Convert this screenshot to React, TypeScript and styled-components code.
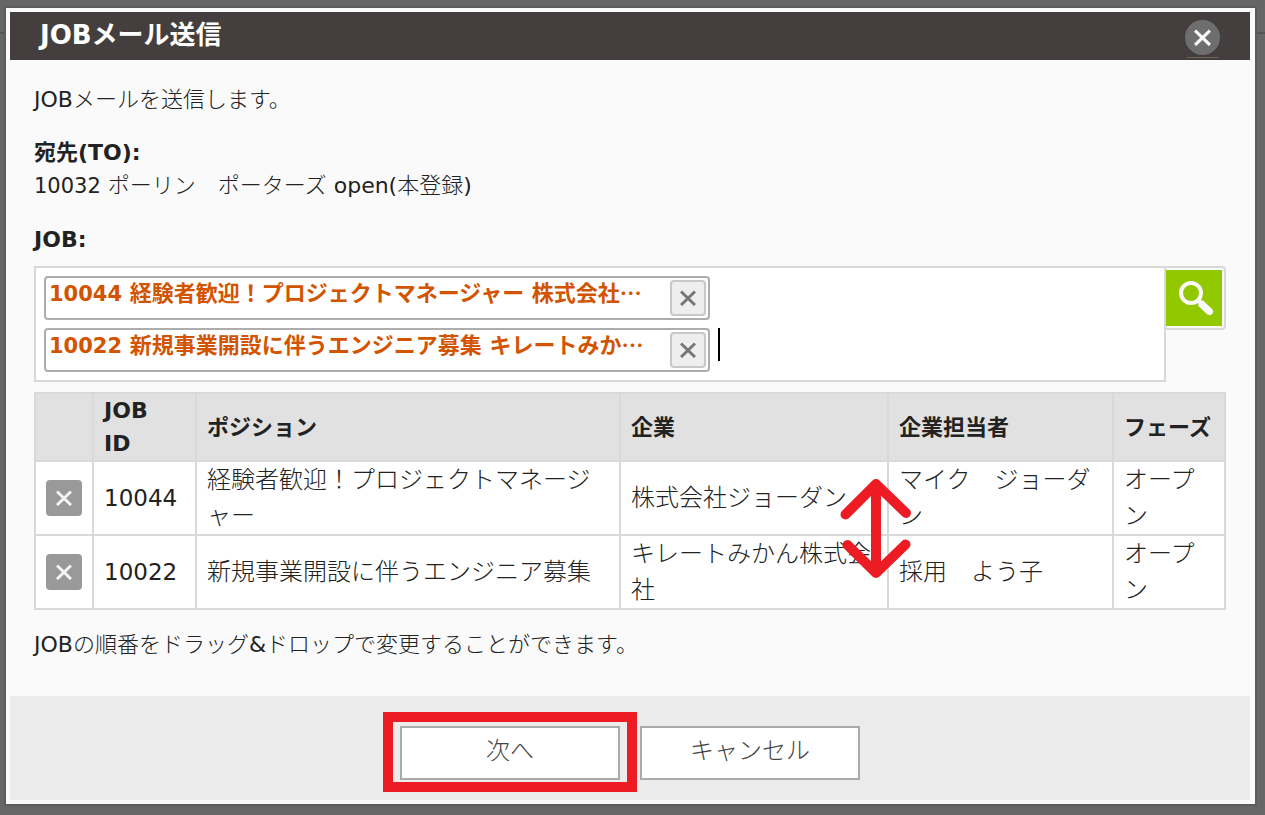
import React from "react";
import styled, { createGlobalStyle } from "styled-components";

const cjk = `"Noto Sans CJK JP", sans-serif`;
const red = "#ed1c24";
const line = "#d9d9d9";

const GlobalStyle = createGlobalStyle`
  *, *::before, *::after { box-sizing: border-box; }
  html, body { margin: 0; min-height: 100%; }
  body {
    background: linear-gradient(#555, #555) 0 32px / 100% 2px no-repeat #666;
    color: #222;
    font: 300 22px/33px "DejaVu Sans", ${cjk};
  }
  button, input { font: inherit; margin: 0; }
`;

const Page = styled.div`
  padding: 8px 10px 11px 6px;
`;

const Dialog = styled.section`
  background: #fafafa;
  padding: 4px 5px 4px 4px;
  box-shadow: 0 0 0 2px #5c5c5c;
`;

const Header = styled.header`
  display: flex;
  justify-content: space-between;
  align-items: flex-start;
  height: 48px;
  padding: 0 30px;
  background: #443f3e;
`;

const Title = styled.h1`
  margin: 0;
  color: #fff;
  font-size: 26px;
  line-height: 46px;
  font-weight: 700;
`;

const CloseWrap = styled.div`
  height: 46px;
  padding-top: 8px;
  background: linear-gradient(#6b6753, #6b6753) center bottom / 31px 1px no-repeat;
`;

const CloseButton = styled.button`
  display: grid;
  place-items: center;
  width: 35px;
  height: 35px;
  padding: 0;
  border: 0;
  border-radius: 50%;
  background: #6e6e6e;
  color: #fafafa;
`;

const Body = styled.div`
  padding: 23px 24px 35px;
`;

const Paragraph = styled.p`
  margin: 0 0 20px;
`;

const Address = styled.dl`
  margin: 0 0 20px;
`;

const Term = styled.dt`
  font-weight: 700;
`;

const Detail = styled.dd`
  margin: 0;
`;

const Label = styled.label`
  display: block;
  margin-bottom: 10px;
  font-weight: 700;
`;

/* The kana and kanji are light; Latin letters and digits keep a regular weight. */
const Latin = styled.span`
  font-weight: 400;
`;

const Digits = styled.span<{ $size?: number; $bold?: boolean }>`
  font-size: ${(p) => p.$size ?? 21}px;
  font-weight: ${(p) => (p.$bold ? 700 : 400)};
`;

const Picker = styled.div`
  display: flex;
  align-items: flex-start;
  margin-bottom: 10px;
`;

const TokenField = styled.div`
  flex: 1;
  display: flex;
  flex-wrap: wrap;
  align-items: flex-start;
  gap: 8px;
  min-width: 0;
  padding: 8px;
  border: 2px solid ${line};
  background: #fff;
`;

const Token = styled.div`
  flex: 0 1 666px;
  display: flex;
  justify-content: space-between;
  height: 44px;
  padding: 2px 2px 2px 3px;
  border: 2px solid #adadad;
  border-radius: 4px;
`;

const TokenText = styled.span`
  color: #d35400;
  font-weight: 700;
  line-height: 22px;
  white-space: nowrap;
`;

const Ellipsis = styled.span`
  font-family: ${cjk};
`;

const IconButton = styled.button<{ $solid?: boolean }>`
  flex: none;
  display: grid;
  place-items: center;
  width: 36px;
  height: 36px;
  padding: 0;
  border: 2px solid ${(p) => (p.$solid ? "#999" : "#c8c8c8")};
  border-radius: 4px;
  background: ${(p) => (p.$solid ? "#999" : "#eee")};
  color: ${(p) => (p.$solid ? "#f5f5f5" : "#777")};
`;

const TokenInput = styled.input`
  flex: 1 1 100px;
  min-width: 0;
  height: 33px;
  padding: 0;
  border: 0;
  border-left: 2px solid #000;
  border-radius: 0;
  background: none;
  outline: none;
`;

const SearchButton = styled.button`
  flex: none;
  width: 60px;
  height: 64px;
  padding: 2px 2px 2px 0;
  border: 2px solid ${line};
  border-left: 0;
  border-radius: 0 4px 4px 0;
  background: #fafafa;
`;

const SearchFace = styled.span`
  display: grid;
  place-items: center;
  height: 100%;
  background: #92c800;
`;

const TableArea = styled.div`
  position: relative;
  margin-bottom: 18px;
`;

const Table = styled.table`
  width: 100%;
  table-layout: fixed;
  border-collapse: collapse;
  background: #fff;
`;

const Col = styled.col<{ $width?: number }>`
  width: ${(p) => (p.$width ? `${p.$width}px` : "auto")};
`;

const Th = styled.th`
  padding: 0 10px;
  border: 2px solid ${line};
  background: #e1e1e1;
  font-weight: 700;
  text-align: left;
`;

const Td = styled.td`
  padding: 0 10px;
  border: 2px solid ${line};
  font-size: 24px;
  line-height: 36px;
  height: 74px;
`;

const DragArrow = styled.svg`
  position: absolute;
  left: 67.5%;
  top: 82px;
`;

const Note = styled.p`
  margin: 0;
`;

const Footer = styled.footer`
  display: flex;
  justify-content: center;
  gap: 20px;
  padding: 30px 0 20px;
  background: #ececec;
`;

const ActionButton = styled.button<{ $marked?: boolean }>`
  position: relative;
  width: 220px;
  height: 54px;
  padding: 0 0 4px;
  border: 2px solid #aaa;
  background: #fff;
  color: #444;
  font-size: 24px;

  &::after {
    content: "";
    display: ${(p) => (p.$marked ? "block" : "none")};
    position: absolute;
    inset: -16px -19px -14px;
    border: 10px solid ${red};
  }
`;

const Cross = ({ size = 16, weight = 3 }: { size?: number; weight?: number }) => (
  <svg width={size} height={size} viewBox="0 0 16 16" fill="none" stroke="currentColor" strokeWidth={weight} aria-hidden="true">
    <path d="M1 1.5 15 15M15 1.5 1 15" />
  </svg>
);

const tokens = [
  { id: "10044", text: "経験者歓迎！プロジェクトマネージャー 株式会社" },
  { id: "10022", text: "新規事業開設に伴うエンジニア募集 キレートみか" },
];

const jobs = [
  { id: "10044", position: "経験者歓迎！プロジェクトマネージャー", company: "株式会社ジョーダン", owner: "マイク　ジョーダン", phase: "オープン" },
  { id: "10022", position: "新規事業開設に伴うエンジニア募集", company: "キレートみかん株式会社", owner: "採用　よう子", phase: "オープン" },
];

export default function App() {
  return (
    <Page lang="ja">
      <GlobalStyle />
      <Dialog role="dialog" aria-labelledby="dialog-title">
        <Header>
          <Title id="dialog-title">JOBメール送信</Title>
          <CloseWrap>
            <CloseButton type="button" aria-label="閉じる">
              <Cross size={17} />
            </CloseButton>
          </CloseWrap>
        </Header>
        <Body>
          <Paragraph><Latin>JOB</Latin>メールを送信します。</Paragraph>
          <Address>
            <Term>宛先(TO):</Term>
            <Detail>
              <Digits>10032</Digits> ポーリン　ポーターズ <Latin>open(</Latin>本登録<Latin>)</Latin>
            </Detail>
          </Address>
          <Label htmlFor="job">JOB:</Label>
          <Picker>
            <TokenField>
              {tokens.map((t) => (
                <Token key={t.id}>
                  <TokenText>
                    <Digits $bold>{t.id}</Digits> {t.text}
                    <Ellipsis>…</Ellipsis>
                  </TokenText>
                  <IconButton type="button" aria-label={`${t.id} を削除`}>
                    <Cross />
                  </IconButton>
                </Token>
              ))}
              <TokenInput id="job" type="text" />
            </TokenField>
            <SearchButton type="button" aria-label="検索">
              <SearchFace>
                <svg width="40" height="40" viewBox="0 0 40 40" fill="none" stroke="#fafafa" aria-hidden="true">
                  <circle cx="17" cy="15" r="10" strokeWidth="4" />
                  <path d="M24 22 27 25" strokeWidth="5" />
                  <path d="M26.5 25 36 34" strokeWidth="7" />
                  <path d="M28 26.500 35.500 33.500" strokeWidth="7" strokeLinecap="round" />
                </svg>
              </SearchFace>
            </SearchButton>
          </Picker>
          <TableArea>
            <Table>
              <colgroup>
                <Col $width={58} />
                <Col $width={103} />
                <Col />
                <Col $width={268} />
                <Col $width={225} />
                <Col $width={112} />
              </colgroup>
              <thead>
                <tr>
                  <Th />
                  <Th scope="col">JOB<br />ID</Th>
                  <Th scope="col">ポジション</Th>
                  <Th scope="col">企業</Th>
                  <Th scope="col">企業担当者</Th>
                  <Th scope="col">フェーズ</Th>
                </tr>
              </thead>
              <tbody>
                {jobs.map((j) => (
                  <tr key={j.id}>
                    <Td>
                      <IconButton $solid type="button" aria-label={`${j.id} を外す`}>
                        <Cross />
                      </IconButton>
                    </Td>
                    <Td><Digits $size={23}>{j.id}</Digits></Td>
                    <Td>{j.position}</Td>
                    <Td>{j.company}</Td>
                    <Td>{j.owner}</Td>
                    <Td>{j.phase}</Td>
                  </tr>
                ))}
              </tbody>
            </Table>
            <DragArrow width="74" height="108" viewBox="0 0 74 108" fill="none" stroke={red} strokeWidth="10" strokeLinecap="round" strokeLinejoin="round" aria-hidden="true">
              <path d="M6.5 40.5 37 10 67 39M37 10V99M8.5 71 37 99 66.5 70.5" />
            </DragArrow>
          </TableArea>
          <Note><Latin>JOB</Latin>の順番をドラッグ<Latin>&amp;</Latin>ドロップで変更することができます。</Note>
        </Body>
        <Footer>
          <ActionButton $marked type="button">次へ</ActionButton>
          <ActionButton type="button">キャンセル</ActionButton>
        </Footer>
      </Dialog>
    </Page>
  );
}
